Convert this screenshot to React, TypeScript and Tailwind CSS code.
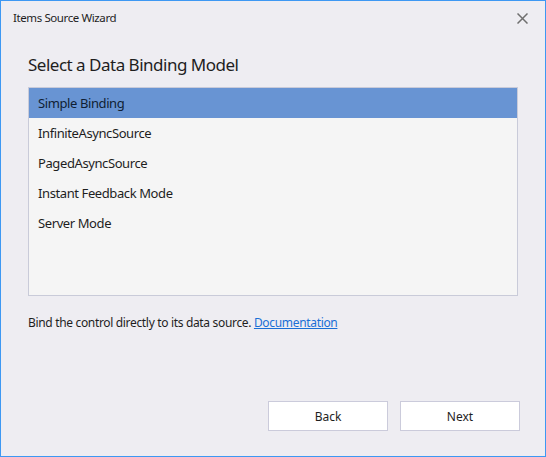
import { useState } from "react"

const items = [
  "Simple Binding",
  "InfiniteAsyncSource",
  "PagedAsyncSource",
  "Instant Feedback Mode",
  "Server Mode",
]

export default function App() {
  const [selected, setSelected] = useState(0)

  return (
    <div
      className="w-[546px] h-[457px] flex flex-col bg-[#eeedf2] border border-[#3d98f3] text-[#1e1e1e]"
      style={{ fontFamily: '"Noto Sans", "Open Sans", sans-serif' }}
    >
      {/* Title bar */}
      <div className="h-[34px] flex items-center justify-between pl-3 pr-[17px]">
        <span className="text-[11.5px] tracking-[-0.4px]">Items Source Wizard</span>
        <svg width="11" height="11" viewBox="0 0 11 11" className="text-[#6f6f6f]">
          <path d="M0.5 0.5 L10.5 10.5 M10.5 0.5 L0.5 10.5" stroke="currentColor" strokeWidth="1.5" />
        </svg>
      </div>

      <div className="flex-1 flex flex-col px-[27px] pb-[25px]">
        <h1 className="mt-[18px] text-[17px] leading-6 tracking-[-0.5px]">Select a Data Binding Model</h1>

        {/* List */}
        <div className="mt-[10px] w-[490px] h-[209px] border border-[#c9cbd9] bg-[#f5f5f5]">
          {items.map((item, i) => (
            <div
              key={item}
              onClick={() => setSelected(i)}
              className={
                "h-[30px] flex items-center pl-[9px] pt-[2px] text-[13px] tracking-[-0.4px] cursor-default " +
                (i === selected ? "bg-[#6894d3] text-[#0f1e33]" : "")
              }
            >
              {item}
            </div>
          ))}
        </div>

        <p className="mt-[19px] text-[12px] leading-4 tracking-[-0.33px]">
          Bind the control directly to its data source.{" "}
          <a href="#" className="text-[#1a6fd6] underline">Documentation</a>
        </p>

        <div className="mt-auto flex justify-end gap-3 mr-[-2px]">
          <button className="w-[120px] h-[30px] pt-[2px] bg-white border border-[#cbcbdb] text-[12px]">Back</button>
          <button className="w-[120px] h-[30px] pt-[2px] bg-white border border-[#cbcbdb] text-[12px]">Next</button>
        </div>
      </div>
    </div>
  )
}
